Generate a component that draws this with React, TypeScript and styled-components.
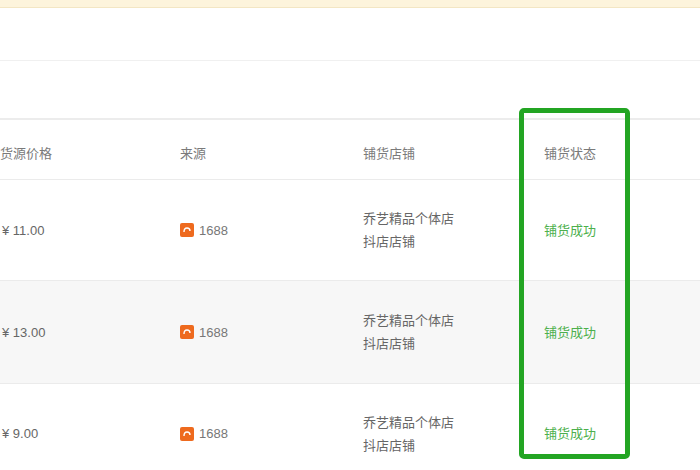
import React from "react";
import styled, { createGlobalStyle } from "styled-components";

const Global = createGlobalStyle`
  body { margin: 0; background: #fff; font-family: "Liberation Sans", "Noto Sans CJK SC", sans-serif; }
`;

const Page = styled.div`
  position: relative;
  width: 700px;
  height: 470px;
  overflow: hidden;
`;

const Notice = styled.div`
  height: 7px;
  background: #fdf4dc;
  border-bottom: 1px solid #f3e6c4;
`;

const Blank = styled.div`
  height: 52px;
  border-bottom: 1px solid #f0f0f0;
`;

const Spacer = styled.div`
  height: 57px;
  border-bottom: 2px solid #ececec;
`;

const Row = styled.div<{ $h: number; $shade?: boolean; $head?: boolean }>`
  display: grid;
  grid-template-columns: 180px 183px 181px 1fr;
  align-items: center;
  box-sizing: border-box;
  height: ${(p) => p.$h}px;
  padding-top: ${(p) => (p.$head ? 8 : 0)}px;
  background: ${(p) => (p.$shade ? "#f7f7f7" : "#fff")};
  border-bottom: 1px solid #ebebeb;
  color: ${(p) => (p.$head ? "#7a7a7a" : "#666")};
  font-size: 13px;
`;

const Cell = styled.div<{ $pad?: number }>`
  padding-left: ${(p) => p.$pad ?? 0}px;
  line-height: 23px;
`;

const Source = styled.div`
  display: flex;
  align-items: center;
  gap: 5px;
  color: #777;
`;

const Logo = styled.span`
  width: 14px;
  height: 14px;
  border-radius: 2px;
  background: #ee6a1e;
  display: inline-flex;
  align-items: center;
  justify-content: center;
`;

const Status = styled.span`
  color: #4cb04c;
`;

const Highlight = styled.div`
  position: absolute;
  left: 519px;
  top: 108px;
  width: 101px;
  height: 341px;
  border: 5px solid #23a523;
  border-radius: 5px;
`;

const rows = [
  { price: "11.00", h: 101, shade: false },
  { price: "13.00", h: 103, shade: true },
  { price: "9.00", h: 100, shade: false },
];

export default function App() {
  return (
    <Page>
      <Global />
      <Notice />
      <Blank />
      <Spacer />
      <Row $h={60} $head>
        <Cell $pad={0}>货源价格</Cell>
        <Cell>来源</Cell>
        <Cell>铺货店铺</Cell>
        <Cell>铺货状态</Cell>
      </Row>
      {rows.map((r) => (
        <Row key={r.price} $h={r.h} $shade={r.shade}>
          <Cell $pad={2}>¥ {r.price}</Cell>
          <Source>
            <Logo>
              <svg width="10" height="10" viewBox="0 0 10 10">
                <path d="M2 7 Q2 3 5 3 Q8 3 8 6" stroke="#fff" strokeWidth="1.4" fill="none" />
              </svg>
            </Logo>
            1688
          </Source>
          <Cell>
            乔艺精品个体店
            <br />
            抖店店铺
          </Cell>
          <Cell $pad={0}>
            <Status>铺货成功</Status>
          </Cell>
        </Row>
      ))}
      <Highlight />
    </Page>
  );
}
